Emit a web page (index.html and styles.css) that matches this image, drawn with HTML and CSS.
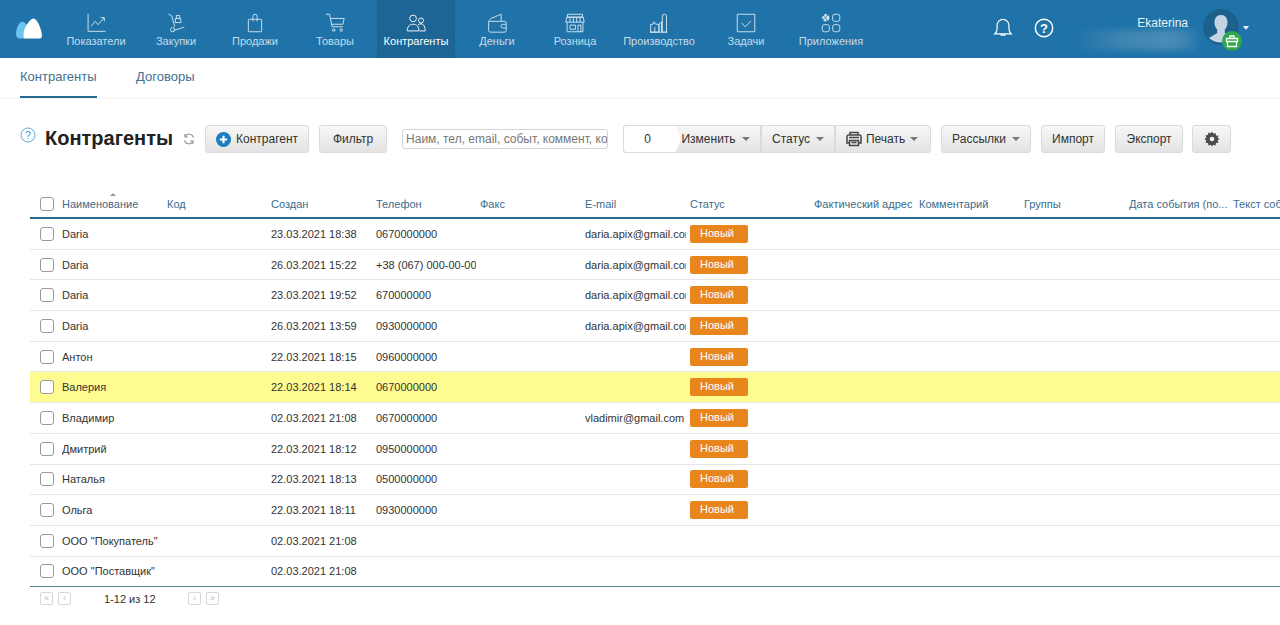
FILE: index.html
```html
<!DOCTYPE html>
<html lang="ru">
<head>
<meta charset="utf-8">
<title>Контрагенты</title>
<link rel="stylesheet" href="styles.css">
</head>
<body>
<header class="topbar">
  <a class="logo" aria-label="Логотип">
    <svg width="28" height="24" viewBox="0 0 28 24"><path d="M6 5C3 7 1 13 1 17c0 3 1.800 4.500 4 4.500h5C9 16 10.500 12 13 9 11 6.500 8 4 6 5z" fill="#6cc4f0"/><path d="M18.500 1.500C15.500 1.500 13 6 10.500 10 8.500 14 8 18 9 21.500h15.500c1.500 0 2.500-1 2.500-3 0-5-4.500-17-8.500-17z" fill="#fff"/></svg>
  </a>
  <nav class="mainnav">
    <a class="navitem w78"><svg class="ic" viewBox="0 0 24 24"><path d="M2.500 1v21h21M6 16l5-6 3.500 4 7-8M17.500 5.500h4.500V10"/></svg><span>Показатели</span></a>
    <a class="navitem w82"><svg class="ic" viewBox="0 0 24 24"><path d="M3 1.500l4 2 3.500 13M11 11.500h7l-.5-5h-6zM12.500 6.500V3h4v3.500M9 21l13-4"/><circle cx="8" cy="20" r="2.500"/></svg><span>Закупки</span></a>
    <a class="navitem w76"><svg class="ic" viewBox="0 0 24 24"><path d="M5 7.500h14a1 1 0 0 1 1 1v13a1 1 0 0 1-1 1H5a1 1 0 0 1-1-1v-13a1 1 0 0 1 1-1zM9.500 10V4a2.500 2.500 0 0 1 5 0v6"/></svg><span>Продажи</span></a>
    <a class="navitem w84"><svg class="ic" viewBox="0 0 24 24"><path d="M1 1.500h4.500l3 15h13M6.500 6.500H23l-1.500 7H8"/><circle cx="10.500" cy="20.500" r="1.500"/><circle cx="19.500" cy="20.500" r="1.500"/></svg><span>Товары</span></a>
    <a class="navitem w78 active"><svg class="ic" viewBox="0 0 24 24"><circle cx="8.500" cy="6.500" r="4"/><circle cx="18" cy="9" r="3"/><path d="M1.500 21.500c0-5 2.500-8 7-8s7 3 7 8zM14.500 14.500c1-1 2-1.500 3.500-1.500 3.500 0 5 4 5 8.500h-7"/></svg><span>Контрагенты</span></a>
    <a class="navitem w84"><svg class="ic" viewBox="0 0 24 24"><path d="M3 10h18a2 2 0 0 1 2 2v9a2 2 0 0 1-2 2H4a2 2 0 0 1-2-2V11zM2 11c0-2 2-4 4-5l11-4.500V10M23 13.500h-4a2 2 0 0 0 0 4.500h4"/></svg><span>Деньги</span></a>
    <a class="navitem w72"><svg class="ic" viewBox="0 0 24 24"><path d="M3 1.500h18v3.500H3zM2 5h20l1 6H1zM6 5v6M10 5v6M14 5v6M18 5v6M2.500 11v11.500h19V11M6 14.500h6.500v5H6zM15.500 22.500v-8h3.500v8"/></svg><span>Розница</span></a>
    <a class="navitem w96"><svg class="ic" viewBox="0 0 24 24"><path d="M2 23v-9.500h3l1-3 2 3h4v9.500zM7 23v-6M12 23v-9.500l3-3V23M16 23V4a2.500 2.500 0 0 1 5 0v19zM1 23h21"/></svg><span>Производство</span></a>
    <a class="navitem w78"><svg class="ic" viewBox="0 0 24 24"><path d="M1.500 1.500h21v21h-21zM7 12l4 4.500 7-7"/></svg><span>Задачи</span></a>
    <a class="navitem w92"><svg class="ic" viewBox="0 0 24 24"><rect x="14" y="1.500" width="8.500" height="8.500" rx="2.500"/><rect x="1.500" y="14" width="8.500" height="8.500" rx="2.500"/><rect x="14" y="14" width="8.500" height="8.500" rx="2.500"/><circle cx="5.700" cy="5.700" r="2.600" stroke-width="3.600" stroke-dasharray="2.400 .8"/></svg><span>Приложения</span></a>
  </nav>
  <div class="tools">
    <svg class="bell" viewBox="0 0 22 22"><path d="M2 17.500c1.800-1.500 2.500-3 2.500-6V8a6.500 6.500 0 0 1 13 0v3.500c0 3 .7 4.500 2.500 6zM9 17.500v1.500h4v-1.500" /></svg>
    <svg class="help" viewBox="0 0 20 20"><circle cx="10" cy="10" r="8.700"/><text x="10" y="14.500" text-anchor="middle">?</text></svg>
  </div>
  <div class="user">
    <span class="username">Ekaterina</span>
    <div class="redact"></div>
  </div>
  <div class="avatar">
    <svg width="36" height="36" viewBox="0 0 36 36"><circle cx="18" cy="18" r="18" fill="#1c608c"/><path d="M18 6c4.500 0 6.500 3.500 6.500 7.500 0 3-1.200 5.500-2.700 7v3.500L30 29a18 18 0 0 1-24 0l8.200-5v-3.500c-1.500-1.500-2.700-4-2.700-7C11.500 9.500 13.500 6 18 6z" fill="#c3d5e2"/></svg>
    <span class="gift"><svg width="14" height="14" viewBox="0 0 14 14"><path d="M1.500 4.500h11v3h-11zM2.500 7.500v5h9v-5M5 4.500V2h4v2.500" fill="none" stroke="#fff" stroke-width="1.300"/></svg></span>
  </div>
  <span class="caret-white"></span>
</header>

<div class="tabs">
  <a class="tab current">Контрагенты</a>
  <a class="tab">Договоры</a>
</div>

<section class="toolbar">
  <svg class="q" viewBox="0 0 16 16"><circle cx="8" cy="8" r="7" /><text x="8" y="11.500" text-anchor="middle">?</text></svg>
  <h1>Контрагенты</h1>
  <svg class="refresh" viewBox="0 0 12 12"><path d="M10.500 4.500A4.700 4.700 0 0 0 2 3.500M1.500 7.500A4.700 4.700 0 0 0 10 8.500M2 1v2.800h2.800M10 11V8.200H7.200"/></svg>
  <button class="btn b-add"><svg width="15" height="15" viewBox="0 0 14 14"><circle cx="7" cy="7" r="7" fill="#1a7dc0"/><path d="M7 3.500v7M3.500 7h7" stroke="#fff" stroke-width="2"/></svg>Контрагент</button>
  <button class="btn b-filter">Фильтр</button>
  <input class="search" placeholder="Наим, тел, email, событ, коммент, ко">
  <div class="group">
    <span class="count">0</span>
    <button class="seg s-edit">Изменить<i class="caret"></i></button>
    <button class="seg s-status">Статус<i class="caret"></i></button>
    <button class="seg s-print"><svg width="16" height="16" viewBox="0 0 16 16"><path d="M4 4V1.500h8V4M3.500 12H1V5.500a1.500 1.500 0 0 1 1.500-1.500h11A1.500 1.500 0 0 1 15 5.500V12h-2.500M3.500 9.500h9v5h-9zM5.500 11.500h5M3 6.500h10" fill="none" stroke="#444" stroke-width="1.500"/></svg>Печать<i class="caret"></i></button>
  </div>
  <button class="btn b-mail">Рассылки<i class="caret"></i></button>
  <button class="btn b-imp">Импорт</button>
  <button class="btn b-exp">Экспорт</button>
  <button class="btn b-gear"><svg width="16" height="16" viewBox="0 0 16 16"><path d="M8 .5l1.300 2.200 2.300-.8.400 2.500 2.500.4-.8 2.300L15.500 8l-1.800 1.400.8 2.300-2.500.4-.4 2.500-2.300-.8L8 15.500l-1.300-1.700-2.300.8-.4-2.500-2.500-.4.800-2.300L.5 8l1.800-1.400-.8-2.300 2.500-.4.400-2.500 2.300.8z" fill="#4d4d4d"/><circle cx="8" cy="8" r="2.300" fill="#eee"/></svg></button>
</section>

<main class="grid">
  <div class="row head">
    <div class="c-box"><span class="check"></span></div>
    <div class="sorted">Наименование</div><div>Код</div><div>Создан</div><div>Телефон</div><div>Факс</div><div>E-mail</div><div>Статус</div><div>Фактический адрес</div><div>Комментарий</div><div>Группы</div><div>Дата события (по...</div><div>Текст события</div>
  </div>
  <div class="row"><div class="c-box"><span class="check"></span></div><div>Daria</div><div></div><div>23.03.2021 18:38</div><div>0670000000</div><div></div><div>daria.apix@gmail.com</div><div><span class="badge">Новый</span></div></div>
  <div class="row"><div class="c-box"><span class="check"></span></div><div>Daria</div><div></div><div>26.03.2021 15:22</div><div>+38 (067) 000-00-00</div><div></div><div>daria.apix@gmail.com</div><div><span class="badge">Новый</span></div></div>
  <div class="row"><div class="c-box"><span class="check"></span></div><div>Daria</div><div></div><div>23.03.2021 19:52</div><div>670000000</div><div></div><div>daria.apix@gmail.com</div><div><span class="badge">Новый</span></div></div>
  <div class="row"><div class="c-box"><span class="check"></span></div><div>Daria</div><div></div><div>26.03.2021 13:59</div><div>0930000000</div><div></div><div>daria.apix@gmail.com</div><div><span class="badge">Новый</span></div></div>
  <div class="row"><div class="c-box"><span class="check"></span></div><div>Антон</div><div></div><div>22.03.2021 18:15</div><div>0960000000</div><div></div><div></div><div><span class="badge">Новый</span></div></div>
  <div class="row marked"><div class="c-box"><span class="check"></span></div><div>Валерия</div><div></div><div>22.03.2021 18:14</div><div>0670000000</div><div></div><div></div><div><span class="badge">Новый</span></div></div>
  <div class="row"><div class="c-box"><span class="check"></span></div><div>Владимир</div><div></div><div>02.03.2021 21:08</div><div>0670000000</div><div></div><div>vladimir@gmail.com</div><div><span class="badge">Новый</span></div></div>
  <div class="row"><div class="c-box"><span class="check"></span></div><div>Дмитрий</div><div></div><div>22.03.2021 18:12</div><div>0950000000</div><div></div><div></div><div><span class="badge">Новый</span></div></div>
  <div class="row"><div class="c-box"><span class="check"></span></div><div>Наталья</div><div></div><div>22.03.2021 18:13</div><div>0500000000</div><div></div><div></div><div><span class="badge">Новый</span></div></div>
  <div class="row"><div class="c-box"><span class="check"></span></div><div>Ольга</div><div></div><div>22.03.2021 18:11</div><div>0930000000</div><div></div><div></div><div><span class="badge">Новый</span></div></div>
  <div class="row"><div class="c-box"><span class="check"></span></div><div>ООО "Покупатель"</div><div></div><div>02.03.2021 21:08</div><div></div><div></div><div></div><div></div></div>
  <div class="row last"><div class="c-box"><span class="check"></span></div><div>ООО "Поставщик"</div><div></div><div>02.03.2021 21:08</div><div></div><div></div><div></div><div></div></div>
</main>

<footer class="pager">
  <span class="pg">«</span><span class="pg">‹</span>
  <span class="pg-text">1-12 из 12</span>
  <span class="pg">›</span><span class="pg">»</span>
</footer>
</body>
</html>
```

FILE: styles.css
```css
* { box-sizing: border-box; }
html, body { margin: 0; height: 625px; overflow: hidden; background: #fff; }
body { font-family: "Liberation Sans", Arial, sans-serif; font-size: 11px; color: #333; }

.topbar { height: 58px; background: #1f73a9; display: flex; position: relative; color: #fff; }
.logo { width: 57px; padding: 17px 0 0 15px; }
.mainnav { display: flex; width: 820px; }
.navitem { display: flex; flex-direction: column; align-items: center; padding-top: 13px; color: #c5dcea; font-size: 11px; line-height: 13px; }
.navitem span { margin-top: 2px; white-space: nowrap; }
.navitem.active { background: #1c6594; color: #fff; border-radius: 2px 2px 0 0; }
.ic { width: 20px; height: 20px; fill: none; stroke: #d7e7f1; stroke-width: 1.100; }
.active .ic { stroke: #fff; }
.w72 { width: 72px; } .w76 { width: 76px; } .w78 { width: 78px; } .w82 { width: 82px; }
.w84 { width: 84px; } .w92 { width: 92px; } .w96 { width: 96px; }

.tools { display: flex; align-items: flex-start; padding: 18px 0 0 116px; gap: 21px; }
.bell { width: 20px; height: 20px; fill: none; stroke: #fff; stroke-width: 1.300; }
.help { width: 20px; height: 20px; fill: none; stroke: #fff; stroke-width: 1.400; }
.help text { fill: #fff; stroke: none; font: bold 13px "Liberation Sans", sans-serif; }

.user { position: absolute; left: 1075px; top: 15px; width: 121px; height: 35px; }
.username { position: absolute; right: 8px; top: 1px; font-size: 12px; color: #f0f6fa; line-height: 14px; }
.redact { position: absolute; left: 0; top: 15px; width: 121px; height: 20px; background: linear-gradient(90deg, #1f73a9, #3e86b1 40%, #4a8eb6 80%, #2f7cae); filter: blur(3px); }
.avatar { position: absolute; left: 1203px; top: 9px; width: 36px; height: 36px; }
.gift { position: absolute; left: 19px; top: 22px; width: 20px; height: 20px; border-radius: 50%; background: #2fa84a; display: flex; align-items: center; justify-content: center; }
.caret-white { position: absolute; left: 1243px; top: 26px; border: 3.500px solid transparent; border-top: 4px solid #e6eff5; border-bottom: 0; }

.tabs { height: 41px; display: flex; gap: 39.500px; padding-left: 20px; border-bottom: 1px solid #f4f4f4; }
.tab { font-size: 13px; color: #44708f; line-height: 37px; height: 40px; }
.tab.current { border-bottom: 2px solid #2a6a90; height: 40px; }

.toolbar { display: flex; align-items: flex-start; height: 91px; padding: 26px 0 0 20px; }
.q { width: 16px; height: 16px; margin-top: 2px; fill: none; stroke: #5aa9dc; stroke-width: 1; }
.q text { fill: #3d8fc6; stroke: none; font: 10px "Liberation Sans", sans-serif; }
h1 { margin: 0 0 0 9px; font-size: 20px; line-height: 27px; font-weight: bold; color: #222; white-space: nowrap; }
.refresh { width: 12px; height: 12px; margin: 8px 0 0 10px; fill: none; stroke: #999; stroke-width: 1.200; }
.btn, .seg { font: 12px "Liberation Sans", sans-serif; color: #333; height: 28px; padding: 0; border: 1px solid #dadada; background: linear-gradient(#f7f7f7, #e3e3e3); border-radius: 3px; display: flex; align-items: center; justify-content: center; gap: 5px; }
.b-add { width: 104px; margin-left: 10px; }
.b-filter { width: 68px; margin-left: 10px; }
.search { width: 206px; height: 20px; margin: 4px 0 0 15px; padding: 0 0 0 3px; border: 1px solid #d5d5d5; border-radius: 3px; font: 12px "Liberation Sans", sans-serif; }
.search::placeholder { color: #777; opacity: 1; }
.group { display: flex; margin-left: 15px; }
.count { width: 53px; height: 28px; border: 1px solid #dadada; border-right: 0; border-radius: 3px 0 0 3px; font-size: 12px; line-height: 26px; text-align: center; padding-right: 5px; }
.seg { border-radius: 0; border-left-width: 0; }
.s-edit { width: 86px; clip-path: polygon(0 0, 100% 0, 100% 100%, 0 100%, 6px 50%); margin-left: -1px; padding-right: 4px; }
.s-status { width: 74px; border-left-width: 1px; }
.s-print { width: 96px; border-left-width: 1px; border-radius: 0 3px 3px 0; gap: 4px; padding-right: 2px; }
.caret { display: inline-block; border: 4.500px solid transparent; border-top: 4.500px solid #777; border-bottom: 0; margin-left: 1px; }
.b-mail { width: 90px; margin-left: 10px; }
.b-imp { width: 64px; margin-left: 10px; }
.b-exp { width: 68px; margin-left: 10px; }
.b-gear { width: 39px; margin-left: 9px; }

.grid { margin-left: 30px; width: 1250px; overflow: hidden; }
.row { display: grid; grid-template-columns: 32px 105px 104px 105px 104px 105px 105px 124px 105px 105px 105px 104px 105px; height: 30.700px; align-items: center; border-bottom: 1px solid #e6e6e6; color: #333; width: 1450px; }
.row > div { overflow: hidden; white-space: nowrap; margin-right: 4px; min-width: 0; line-height: 14px; }
.row > .c-box { overflow: visible; margin: 0; padding-left: 10px; height: 14px; display: flex; align-items: center; }
.check { display: block; width: 14px; height: 14px; border: 1px solid #999; border-radius: 3px; background: #fff; flex: none; }
.head { height: 29px; border-bottom: 2px solid #2c6a8c; color: #3c6c8c; }
.row.head > div { margin-right: 1px; }
.row.head > .sorted { overflow: visible; position: relative; }
.sorted::before { content: ""; position: absolute; left: 48px; top: -4px; border: 3px solid transparent; border-bottom: 3px solid #999; border-top: 0; }
.marked { background: #fefb90; }
.last { border-bottom: 1px solid #5c7f90; }
.badge { display: block; width: 58px; height: 18px; background: #e8861c; color: #fff; border-radius: 2px; line-height: 16px; padding-left: 10px; }

.pager { display: flex; align-items: center; height: 23px; padding: 0 0 0 40px; gap: 5px; font-size: 11px; color: #333; }
.pg { width: 13px; height: 13px; border: 1px solid #d8d8d8; border-radius: 2px; color: #bbb; font-size: 9px; line-height: 10px; text-align: center; }
.pg-text { width: 107px; padding-left: 28px; }
```
